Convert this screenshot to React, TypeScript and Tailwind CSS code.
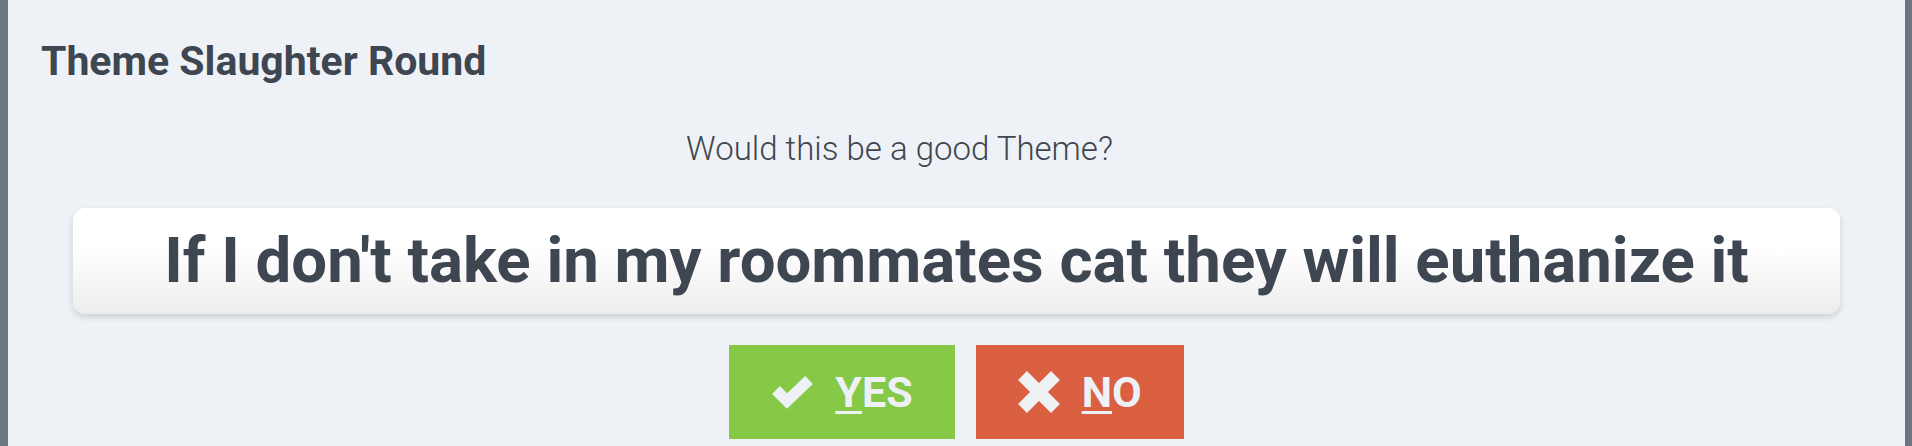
import React from 'react';

function CheckIcon() {
  return (
    <svg width="43" height="34" viewBox="0 0 43 34" className="shrink-0">
      <polyline
        points="5,15 16,26 38,5"
        fill="none"
        stroke="currentColor"
        strokeWidth="11"
        strokeLinecap="butt"
        strokeLinejoin="miter"
      />
    </svg>
  );
}

function TimesIcon() {
  return (
    <svg width="42" height="42" viewBox="0 0 42 42" className="shrink-0">
      <path
        d="M4.5 4.5 L37.5 37.5 M37.5 4.5 L4.5 37.5"
        fill="none"
        stroke="currentColor"
        strokeWidth="12.5"
        strokeLinecap="butt"
      />
    </svg>
  );
}

export default function App() {
  const font = { fontFamily: 'Roboto, "Liberation Sans", sans-serif' };

  return (
    <div
      className="h-[446px] overflow-hidden bg-[#eef2f7] border-l-8 border-r-[7px] border-[#6e7781]"
      style={font}
    >
      <h1 className="pt-9 pl-[33px] text-[41px] leading-[50px] font-bold text-[#3e4651]">
        Theme Slaughter Round
      </h1>

      <p className="mt-[42px] pr-[114px] text-center text-[33px] leading-[42px] font-light text-[#3e4651]">
        Would this be a good Theme?
      </p>

      <div className="mt-[38px] mx-[65px] h-[106px] flex items-center justify-center rounded-xl bg-linear-to-b from-white via-white via-40% to-[#ececec] shadow-[0_3px_6px_rgba(0,0,0,0.15)]">
        <span className="text-[63.5px] leading-none font-bold text-[#3e4651]">
          If I don't take in my roommates cat they will euthanize it
        </span>
      </div>

      <div className="mt-[31px] flex justify-center gap-[21px]">
        <button className="h-[94px] flex items-center gap-[21px] px-[42px] bg-[#85c947] text-[#eef2f7]">
          <CheckIcon />
          <span className="text-[43px] leading-none font-bold">
            <span className="underline decoration-[3px] underline-offset-[4px]">Y</span>ES
          </span>
        </button>
        <button className="h-[94px] flex items-center gap-[22px] px-[42px] bg-[#db5f41] text-[#eef2f7]">
          <TimesIcon />
          <span className="text-[43px] leading-none font-bold">
            <span className="underline decoration-[3px] underline-offset-[4px]">N</span>O
          </span>
        </button>
      </div>
    </div>
  );
}
